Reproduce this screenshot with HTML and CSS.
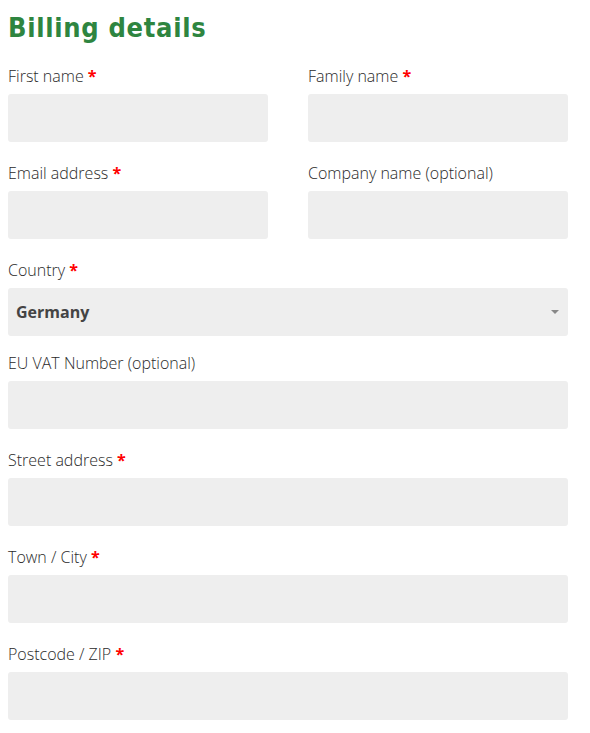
FILE: index.html
```html
<!DOCTYPE html>
<html lang="en">
<head>
    <meta charset="UTF-8">
    <meta name="viewport" content="width=device-width, initial-scale=1.0">
    <title>Billing details</title>
    <link rel="stylesheet" href="styles.css">
</head>
<body>
    <form class="billing">
        <h2>Billing details</h2>
        <div class="row two">
            <div class="field">
                <label for="first">First name <abbr>*</abbr></label>
                <input type="text" id="first">
            </div>
            <div class="field">
                <label for="family">Family name <abbr>*</abbr></label>
                <input type="text" id="family">
            </div>
        </div>
        <div class="row two">
            <div class="field">
                <label for="email">Email address <abbr>*</abbr></label>
                <input type="text" id="email">
            </div>
            <div class="field">
                <label for="company">Company name (optional)</label>
                <input type="text" id="company">
            </div>
        </div>
        <div class="row">
            <div class="field">
                <label for="country">Country <abbr>*</abbr></label>
                <div class="select">
                    <span>Germany</span>
                    <svg width="10" height="6" viewBox="0 0 10 6"><path d="M1 1h8L5 5z" fill="#888"/></svg>
                </div>
            </div>
        </div>
        <div class="row tight">
            <div class="field">
                <label for="vat">EU VAT Number (optional)</label>
                <input type="text" id="vat">
            </div>
        </div>
        <div class="row">
            <div class="field">
                <label for="street">Street address <abbr>*</abbr></label>
                <input type="text" id="street">
            </div>
        </div>
        <div class="row">
            <div class="field">
                <label for="town">Town / City <abbr>*</abbr></label>
                <input type="text" id="town">
            </div>
        </div>
        <div class="row">
            <div class="field">
                <label for="zip">Postcode / ZIP <abbr>*</abbr></label>
                <input type="text" id="zip">
            </div>
        </div>
    </form>
</body>
</html>
```

FILE: styles.css
```css
body {
    margin: 0;
    padding: 0 8px;
    font-family: "Open Sans", Lato, sans-serif;
    background: #fff;
    color: #333;
}
.billing {
    width: 560px;
}
h2 {
    margin: 8px 0 0;
    font-family: "DejaVu Sans Condensed", "DejaVu Sans", sans-serif;
    font-weight: bold;
    font-size: 27px;
    letter-spacing: 0.7px;
    color: #2e8540;
    line-height: 40px;
}
.row {
    margin-top: 19px;
}
.row.tight {
    margin-top: 15px;
}
.row.two {
    display: grid;
    grid-template-columns: 1fr 1fr;
    gap: 40px;
}
.billing h2 + .row {
    margin-top: 16px;
}
.field label {
    display: block;
    font-size: 16px;
    font-weight: 300;
    line-height: 24px;
    margin-bottom: 6px;
    color: #2a2a2a;
}
.field abbr {
    color: #f00;
    font-weight: bold;
    text-decoration: none;
}
.field input,
.select {
    display: block;
    box-sizing: border-box;
    width: 100%;
    height: 48px;
    border: none;
    border-radius: 3px;
    background: #eee;
    font: inherit;
}
.select {
    display: flex;
    align-items: center;
    justify-content: space-between;
    padding: 0 8px;
    font-weight: bold;
    font-size: 16px;
    color: #444;
}
```
